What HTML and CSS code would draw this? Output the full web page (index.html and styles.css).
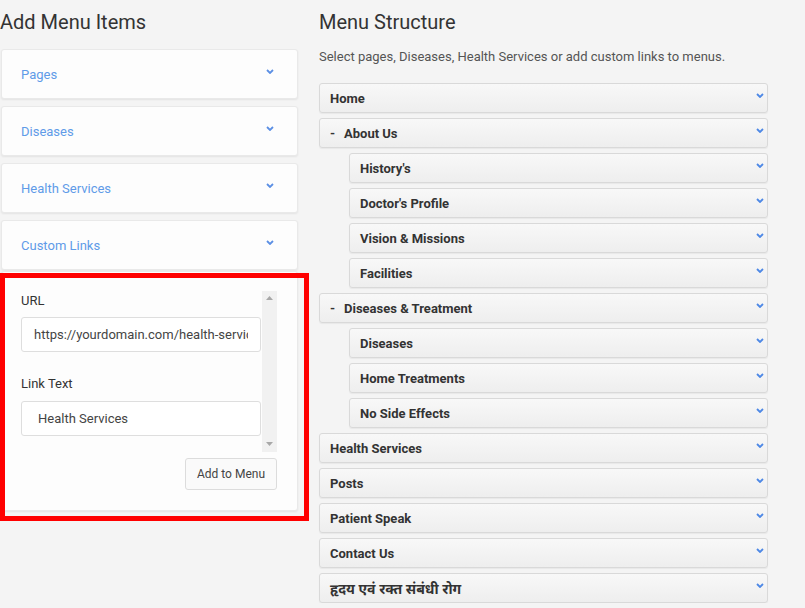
FILE: index.html
```html
<!DOCTYPE html>
<html lang="en">
<head>
<meta charset="utf-8">
<title>Menus</title>
<link rel="stylesheet" href="styles.css">
</head>
<body>
<div class="page">
  <section class="left">
    <h2 class="title">Add Menu Items</h2>
    <div class="acc">
      <div class="acc-card"><span>Pages</span><svg class="chev" viewBox="0 0 8 5"><polyline points="1,1 4,4 7,1"/></svg></div>
      <div class="acc-card"><span>Diseases</span><svg class="chev" viewBox="0 0 8 5"><polyline points="1,1 4,4 7,1"/></svg></div>
      <div class="acc-card"><span>Health Services</span><svg class="chev" viewBox="0 0 8 5"><polyline points="1,1 4,4 7,1"/></svg></div>
      <div class="acc-group">
        <div class="acc-card open"><span>Custom Links</span><svg class="chev" viewBox="0 0 8 5"><polyline points="1,1 4,4 7,1"/></svg></div>
        <div class="form-card">
          <div class="scroller">
            <div class="scroll-content">
              <label class="lbl">URL</label>
              <input class="field" type="text" value="https://yourdomain.com/health-services">
              <label class="lbl lbl-2">Link Text</label>
              <input class="field field-wide" type="text" value="Health Services">
            </div>
            <div class="sbar">
              <svg class="sarrow" viewBox="0 0 7 4"><polygon points="0,4 3.5,0 7,4"/></svg>
              <svg class="sarrow" viewBox="0 0 7 4"><polygon points="0,0 3.5,4 7,0"/></svg>
            </div>
          </div>
          <div class="actions"><button class="btn">Add to Menu</button></div>
          <div class="highlight"></div>
        </div>
      </div>
    </div>
  </section>
  <section class="right">
    <h2 class="title">Menu Structure</h2>
    <p class="desc">Select pages, Diseases, Health Services or add custom links to menus.</p>
    <div class="menu">
      <div class="item"><span>Home</span><svg class="ichev" viewBox="0 0 8 5"><polyline points="1,1 4,4 7,1"/></svg></div>
      <div class="item"><span><span class="dash">-</span>About Us</span><svg class="ichev" viewBox="0 0 8 5"><polyline points="1,1 4,4 7,1"/></svg></div>
      <div class="sub">
        <div class="item"><span>History's</span><svg class="ichev" viewBox="0 0 8 5"><polyline points="1,1 4,4 7,1"/></svg></div>
        <div class="item"><span>Doctor's Profile</span><svg class="ichev" viewBox="0 0 8 5"><polyline points="1,1 4,4 7,1"/></svg></div>
        <div class="item"><span>Vision &amp; Missions</span><svg class="ichev" viewBox="0 0 8 5"><polyline points="1,1 4,4 7,1"/></svg></div>
        <div class="item"><span>Facilities</span><svg class="ichev" viewBox="0 0 8 5"><polyline points="1,1 4,4 7,1"/></svg></div>
      </div>
      <div class="item"><span><span class="dash">-</span>Diseases &amp; Treatment</span><svg class="ichev" viewBox="0 0 8 5"><polyline points="1,1 4,4 7,1"/></svg></div>
      <div class="sub">
        <div class="item"><span>Diseases</span><svg class="ichev" viewBox="0 0 8 5"><polyline points="1,1 4,4 7,1"/></svg></div>
        <div class="item"><span>Home Treatments</span><svg class="ichev" viewBox="0 0 8 5"><polyline points="1,1 4,4 7,1"/></svg></div>
        <div class="item"><span>No Side Effects</span><svg class="ichev" viewBox="0 0 8 5"><polyline points="1,1 4,4 7,1"/></svg></div>
      </div>
      <div class="item"><span>Health Services</span><svg class="ichev" viewBox="0 0 8 5"><polyline points="1,1 4,4 7,1"/></svg></div>
      <div class="item"><span>Posts</span><svg class="ichev" viewBox="0 0 8 5"><polyline points="1,1 4,4 7,1"/></svg></div>
      <div class="item"><span>Patient Speak</span><svg class="ichev" viewBox="0 0 8 5"><polyline points="1,1 4,4 7,1"/></svg></div>
      <div class="item"><span>Contact Us</span><svg class="ichev" viewBox="0 0 8 5"><polyline points="1,1 4,4 7,1"/></svg></div>
      <div class="item"><span class="hi">हृदय एवं रक्त संबंधी रोग</span><svg class="ichev" viewBox="0 0 8 5"><polyline points="1,1 4,4 7,1"/></svg></div>
    </div>
  </section>
</div>
</body>
</html>
```

FILE: styles.css
```css
* { box-sizing: border-box; }
html, body { margin: 0; padding: 0; }
body {
  background: #f4f4f4;
  font-family: Roboto, "Noto Sans", "DejaVu Sans", sans-serif;
  color: #333;
  overflow: hidden;
}
.page {
  display: flex;
  gap: 20px;
  padding-top: 10px;
}
.left { width: 299px; flex: none; }
.right { width: 449px; flex: none; }
.title {
  margin: 0;
  font-size: 20px;
  line-height: 24px;
  font-weight: 400;
  color: #333;
}
.left .title { margin-bottom: 15px; }
.desc {
  margin: 15px 0 18px;
  font-size: 13px;
  line-height: 16px;
  color: #555;
}
.acc { display: flex; flex-direction: column; gap: 7px; margin-left: 1px; }
.acc-card {
  height: 50px;
  width: 297px;
  background: #fdfdfd;
  border: 1px solid #e9e9e9;
  border-radius: 3px;
  box-shadow: 0 1px 2px rgba(0,0,0,0.07);
  display: flex;
  align-items: center;
  justify-content: space-between;
  padding: 0 23px 0 19px;
  font-size: 13px;
  color: #5f9be8;
}
.chev {
  width: 8px; height: 5px;
  margin-top: -5px;
  fill: none;
  stroke: #5b8fe4;
  stroke-width: 1.8;
}
.acc-group { display: flex; flex-direction: column; }
.form-card {
  position: relative;
  width: 297px;
  margin-top: 1px;
  background: #fdfdfd;
  border: 1px solid #e9e9e9;
  border-radius: 3px;
  box-shadow: 0 1px 2px rgba(0,0,0,0.07);
  padding: 19px 20px 20px 19px;
}
.scroller {
  height: 161px;
  display: flex;
  align-items: stretch;
}
.scroll-content {
  flex: 1;
  display: flex;
  flex-direction: column;
  align-items: flex-start;
  padding-top: 2px;
}
.sbar {
  width: 15px;
  flex: none;
  background: #f1f1f1;
  display: flex;
  flex-direction: column;
  justify-content: space-between;
  align-items: center;
  padding: 5px 0 6px;
}
.sarrow { width: 7px; height: 4px; fill: #a8a8a8; }
.lbl {
  font-size: 13px;
  line-height: 15px;
  color: #333;
}
.lbl-2 { margin-top: 24px; }
.field {
  margin-top: 9px;
  width: 240px;
  height: 35px;
  flex: none;
  border: 1px solid #dedede;
  border-radius: 3px;
  background: #fff;
  padding: 0 12px;
  font-family: Roboto, "Noto Sans", sans-serif;
  font-size: 13px;
  color: #444;
  outline: none;
}
.field-wide { margin-top: 10px; padding-left: 16px; }
.actions {
  display: flex;
  justify-content: flex-end;
  margin-top: 6px;
}
.btn {
  width: 92px;
  height: 32px;
  background: #fafafa;
  border: 1px solid #dcdcdc;
  border-radius: 3px;
  font-family: Roboto, "Noto Sans", sans-serif;
  font-size: 12px;
  color: #444;
  padding: 0;
}
.highlight {
  position: absolute;
  left: -2px;
  top: 1px;
  width: 309px;
  height: 248px;
  border: 5px solid #ff0000;
  pointer-events: none;
}
.menu { display: flex; flex-direction: column; gap: 5px; }
.sub { display: flex; flex-direction: column; gap: 5px; margin-left: 30px; }
.item {
  height: 30px;
  display: flex;
  justify-content: space-between;
  align-items: center;
  padding: 1px 3px 0 10px;
  background: linear-gradient(#f8f8f8, #eeeeee);
  border: 1px solid #d9d9d9;
  border-radius: 3px;
  box-shadow: 0 1px 1px rgba(0,0,0,0.05);
  font-size: 13px;
  font-weight: 700;
  color: #333;
}
.dash { display: inline-block; width: 14px; }
.hi { font-family: "Noto Sans", "Noto Sans Devanagari", "Lohit Devanagari", sans-serif; font-size: 14px; }
.ichev {
  align-self: flex-start;
  margin-top: 8px;
  width: 8px; height: 5px;
  fill: none;
  stroke: #4d88e6;
  stroke-width: 1.8;
}
```
